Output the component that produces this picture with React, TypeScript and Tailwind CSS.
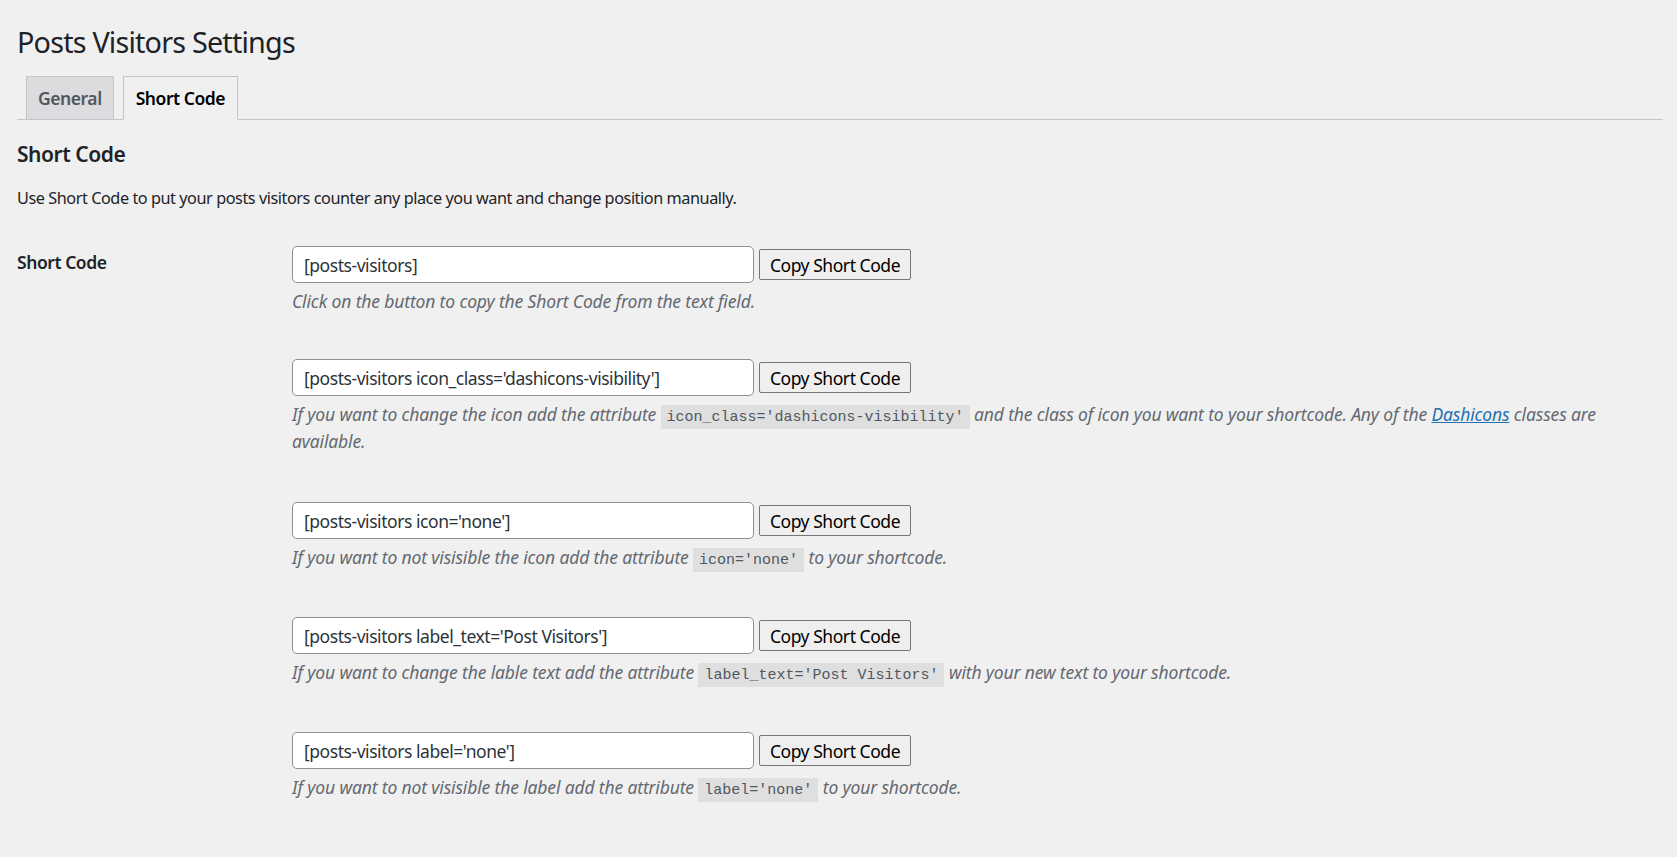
import { useState } from 'react';

type Shortcode = {
  value: string;
  gap: string;
  desc: React.ReactNode;
};

const Code = ({ children }: { children: React.ReactNode }) => (
  <code className="bg-[rgba(0,0,0,0.07)] px-[6px] pt-[4px] pb-[3px] font-['Liberation_Mono',monospace] text-[15px] leading-none tracking-normal not-italic text-[#50575e]">
    {children}
  </code>
);

const shortcodes: Shortcode[] = [
  {
    value: '[posts-visitors]',
    gap: 'mb-[44px]',
    desc: <>Click on the button to copy the Short Code from the text field.</>,
  },
  {
    value: "[posts-visitors icon_class='dashicons-visibility']",
    gap: 'mb-[47px]',
    desc: (
      <>
        If you want to change the icon add the attribute <Code>icon_class='dashicons-visibility'</Code> and the class of icon
        you want to your shortcode. Any of the{' '}
        <a href="#" className="text-[#2271b1] underline">
          Dashicons
        </a>{' '}
        classes are
        <br />
        available.
      </>
    ),
  },
  {
    value: "[posts-visitors icon='none']",
    gap: 'mb-[46px]',
    desc: (
      <>
        If you want to not visisible the icon add the attribute <Code>icon='none'</Code> to your shortcode.
      </>
    ),
  },
  {
    value: "[posts-visitors label_text='Post Visitors']",
    gap: 'mb-[46px]',
    desc: (
      <>
        If you want to change the lable text add the attribute <Code>label_text='Post Visitors'</Code> with your new text to
        your shortcode.
      </>
    ),
  },
  {
    value: "[posts-visitors label='none']",
    gap: 'mb-[46px]',
    desc: (
      <>
        If you want to not visisible the label add the attribute <Code>label='none'</Code> to your shortcode.
      </>
    ),
  },
];

const App = () => {
  const [tab, setTab] = useState('shortcode');

  return (
    <div className="min-h-[857px] bg-[#f0f0f1] pl-[17px] pr-[14px] pt-[12px] font-['Noto_Sans',sans-serif] tracking-[-0.45px] text-[#1d2327]">
      <h1 className="pt-[11px] pb-[5px] text-[28.75px] leading-[37px] font-normal tracking-[-0.8px]">Posts Visitors Settings</h1>

      <div className="mt-[11px] flex border-b border-[#c3c4c7] pl-[9px]">
        <button
          onClick={() => setTab('general')}
          className={`-mb-px mr-[9px] border border-[#c3c4c7] px-[11px] py-[6px] text-[17.5px] leading-[30px] font-semibold ${
            tab === 'general' ? 'border-b-[#f0f0f1] bg-[#f0f0f1] text-black' : 'bg-[#dcdcde] text-[#50575e]'
          }`}
        >
          General
        </button>
        <button
          onClick={() => setTab('shortcode')}
          className={`-mb-px border border-[#c3c4c7] px-[12px] py-[6px] text-[17.5px] leading-[30px] font-semibold ${
            tab === 'shortcode' ? 'border-b-[#f0f0f1] bg-[#f0f0f1] text-black' : 'bg-[#dcdcde] text-[#50575e]'
          }`}
        >
          Short Code
        </button>
      </div>

      <h2 className="mt-[20px] text-[21px] leading-[28px] font-semibold">Short Code</h2>
      <p className="mt-[18px] text-[16.25px] leading-[24px]">
        Use Short Code to put your posts visitors counter any place you want and change position manually.
      </p>

      <div className="mt-[36px] flex">
        <div className="w-[275px] shrink-0 pt-[4px] text-[17.5px] leading-[24px] font-semibold">Short Code</div>
        <div className="flex-1 pr-[12px]">
          {shortcodes.map((s) => (
            <div key={s.value} className={s.gap}>
              <div className="flex items-center gap-[5px]">
                <input
                  readOnly
                  value={s.value}
                  className="h-[37px] w-[462px] rounded-[5px] border border-[#8c8f94] bg-white px-[11px] text-[17.5px] text-[#2c3338] outline-none"
                />
                <button
                  onClick={() => navigator.clipboard?.writeText(s.value)}
                  className="h-[31px] w-[152px] rounded-[2px] border border-[#767676] bg-[#efefef] text-center text-[17.5px] leading-[22px] text-black"
                >
                  Copy Short Code
                </button>
              </div>
              <p className="mt-[5px] text-[17.5px] leading-[27px] tracking-[-0.15px] italic text-[#646970]">{s.desc}</p>
            </div>
          ))}
        </div>
      </div>
    </div>
  );
};

export default App;
